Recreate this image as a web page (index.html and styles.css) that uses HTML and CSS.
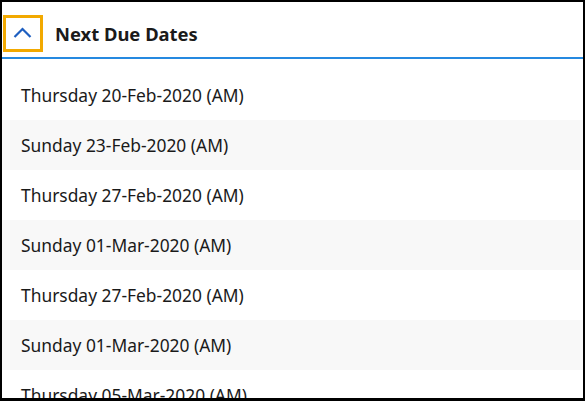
FILE: index.html
```html
<!DOCTYPE html>
<html lang="en">
<head>
    <meta charset="UTF-8">
    <meta name="viewport" content="width=device-width, initial-scale=1.0">
    <title>Next Due Dates</title>
    <link rel="stylesheet" href="styles.css">
</head>
<body>
    <div class="panel">
        <!-- Kepala panel -->
        <div class="panel-header">
            <button class="toggle-btn" aria-label="Collapse">
                <svg width="20" height="12" viewBox="0 0 20 12">
                    <polyline points="1.5,10 9.5,2 17.5,10" fill="none" stroke="#1e5fc0" stroke-width="2.2"/>
                </svg>
            </button>
            <h2 class="panel-title">Next Due Dates</h2>
        </div>

        <!-- Daftar tanggal -->
        <ul class="dates">
            <li>Thursday 20-Feb-2020 (AM)</li>
            <li>Sunday 23-Feb-2020 (AM)</li>
            <li>Thursday 27-Feb-2020 (AM)</li>
            <li>Sunday 01-Mar-2020 (AM)</li>
            <li>Thursday 27-Feb-2020 (AM)</li>
            <li>Sunday 01-Mar-2020 (AM)</li>
            <li>Thursday 05-Mar-2020 (AM)</li>
        </ul>
    </div>
</body>
</html>
```

FILE: styles.css
```css
body {
    margin: 0;
    font-family: "Segoe UI", "Noto Sans", sans-serif;
    color: #1a1a1a;
    background-color: #fff;
}

.panel {
    height: 401px;
    box-sizing: border-box;
    border: 2px solid #000;
    border-bottom-width: 3px;
    overflow: hidden;
}

.panel-header {
    display: flex;
    align-items: center;
    height: 57px;
    box-sizing: border-box;
    padding: 8px 0 0 1px;
    border-bottom: 2px solid #2589e0;
}

.toggle-btn {
    width: 40px;
    height: 37px;
    box-sizing: border-box;
    border: 3px solid #f2a900;
    background: #fff;
    padding: 0;
    margin: 0;
    display: flex;
    align-items: center;
    justify-content: center;
    cursor: pointer;
}

.toggle-btn svg {
    display: block;
    margin-top: -1px;
}

.panel-title {
    margin: 0 0 0 12px;
    font-size: 18.4px;
    font-weight: bold;
}

.dates {
    list-style: none;
    margin: 0;
    padding: 11px 0 0 0;
}

.dates li {
    height: 50px;
    line-height: 50px;
    padding-left: 19px;
    font-size: 17.4px;
}

.dates li:nth-child(even) {
    background-color: #f8f8f8;
}
```
